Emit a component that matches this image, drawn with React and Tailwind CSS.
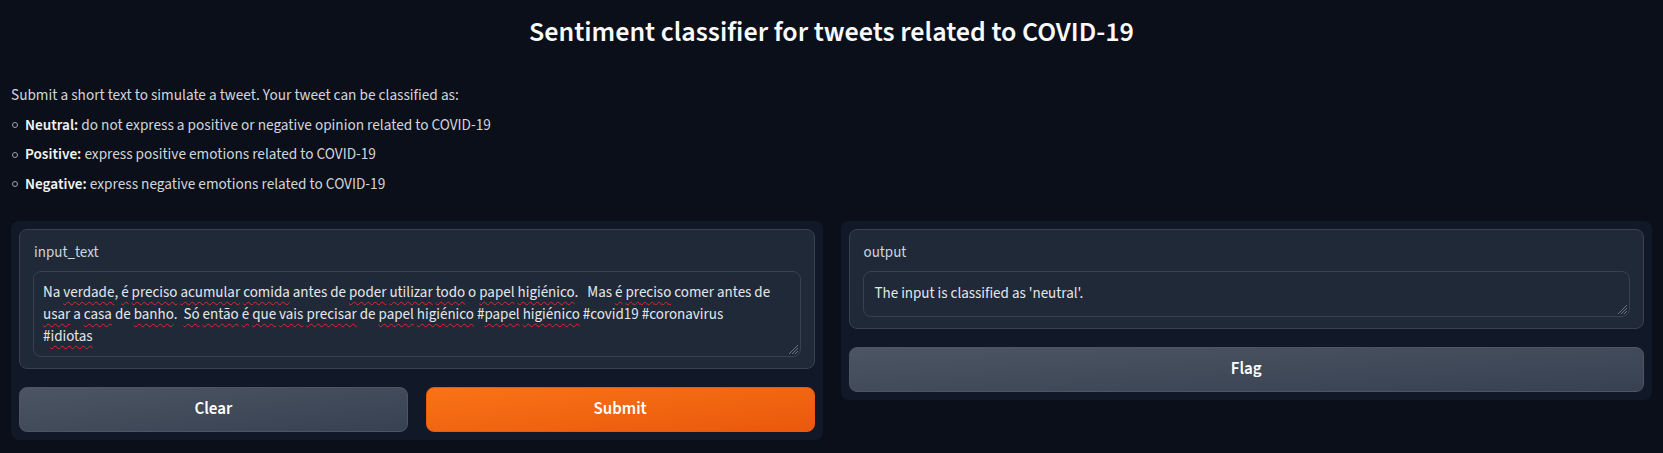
// spellcheck-style squiggle under a word
function W({ children }) {
  return (
    <span className="underline decoration-wavy decoration-[#e0282e] decoration-1 underline-offset-[4px]">
      {children}
    </span>
  );
}

function ResizeGrip() {
  return (
    <svg
      className="absolute right-[2px] bottom-[2px] w-[10px] h-[10px] text-[#6b7280]"
      viewBox="0 0 10 10"
      fill="none"
      stroke="currentColor"
      strokeWidth="1"
    >
      <path d="M10 1L1 10M10 4L4 10M10 7L7 10" />
    </svg>
  );
}

function Block({ label, children }) {
  return (
    <div className="bg-[#1f2937] border border-[#374151] rounded-lg px-[13px] pt-[13px] pb-[11px]">
      <div className="text-[15px] leading-[20px] text-[#d1d5db] pl-[1px]">{label}</div>
      <div className="mt-[8px]">{children}</div>
    </div>
  );
}

function Button({ primary, children }) {
  return (
    <button
      className={
        primary
          ? "h-[45px] w-full rounded-lg border border-[#ea580c] bg-gradient-to-br from-[#f97316] to-[#ea580c] text-white text-[17px] font-semibold"
          : "h-[45px] w-full rounded-lg border border-[#4b5563] bg-gradient-to-br from-[#4b5563] to-[#374151] text-white text-[17px] font-semibold"
      }
    >
      {children}
    </button>
  );
}

export default function App() {
  return (
    <div className="min-h-screen bg-[#0b0f19] text-[#e5e7eb] font-['Source_Sans_3','Source_Sans_Pro',Lato,sans-serif] px-[11px] pt-[15px]">
      <h1 className="text-center text-[28px] leading-[34px] font-semibold text-[#f9fafb]">
        Sentiment classifier for tweets related to COVID-19
      </h1>

      <div className="mt-[32px] text-[15.25px] text-[#d1d5db]">
        <p className="h-[29.5px] leading-[29.5px]">
          Submit a short text to simulate a tweet. Your tweet can be classified as:
        </p>
        {[
          ["Neutral:", "do not express a positive or negative opinion related to COVID-19"],
          ["Positive:", "express positive emotions related to COVID-19"],
          ["Negative:", "express negative emotions related to COVID-19"],
        ].map(([k, v]) => (
          <div key={k} className="h-[29.5px] leading-[29.5px] flex items-center">
            <span className="ml-[1px] w-[6px] h-[6px] rounded-full border border-[#9ca3af]" />
            <span className="ml-[7px]">
              <b className="font-semibold text-[#f3f4f6]">{k}</b> {v}
            </span>
          </div>
        ))}
      </div>

      <div className="mt-[22px] grid grid-cols-2 gap-[18px] items-start">
        <div className="bg-[#111827] rounded-lg p-[8px] flex flex-col gap-[18px]">
          <Block label="input_text">
            <div className="relative h-[86px] border border-[#374151] rounded-lg bg-[#1f2937] pl-[9px] pt-[10px] text-[15px] leading-[22px] text-[#e5e7eb] whitespace-pre overflow-hidden">
              <div>
                Na <W>verdade</W>, <W>é</W> <W>preciso</W> <W>acumular</W> <W>comida</W> antes de <W>poder</W>{" "}
                <W>utilizar</W> <W>todo</W> o <W>papel</W> <W>higiénico</W>.{"   "}Mas <W>é</W> <W>preciso</W> comer antes de
              </div>
              <div>
                <W>usar</W> a <W>casa</W> de <W>banho</W>.{"  "}<W>Só</W> <W>então</W> <W>é</W> <W>que</W> <W>vais</W>{" "}
                <W>precisar</W> de <W>papel</W> <W>higiénico</W> #<W>papel</W> <W>higiénico</W> #covid19 #coronavirus
              </div>
              <div>
                #<W>idiotas</W>
              </div>
              <ResizeGrip />
            </div>
          </Block>
          <div className="grid grid-cols-2 gap-[18px]">
            <Button>Clear</Button>
            <Button primary>Submit</Button>
          </div>
        </div>

        <div className="bg-[#111827] rounded-lg p-[8px] flex flex-col gap-[18px]">
          <Block label="output">
            <div className="relative h-[46px] border border-[#374151] rounded-lg bg-[#1f2937] pl-[11px] pt-[11px] text-[15px] leading-[22px] text-[#e5e7eb]">
              The input is classified as 'neutral'.
              <ResizeGrip />
            </div>
          </Block>
          <Button>Flag</Button>
        </div>
      </div>
    </div>
  );
}
